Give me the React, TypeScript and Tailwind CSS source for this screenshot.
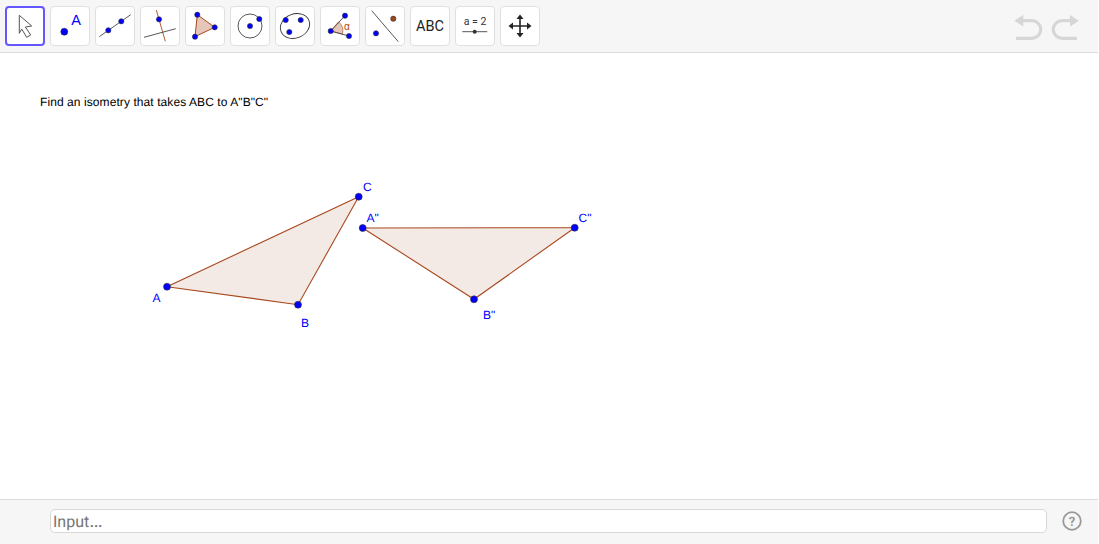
import React from 'react';

const BLUE = '#0000ff';
const LINE = '#a9481e';

const Pt = ({ x, y, r = 2.6, fill = BLUE }: { x: number; y: number; r?: number; fill?: string }) => (
  <circle cx={x} cy={y} r={r} fill={fill} stroke="#333" strokeWidth={0.6} />
);

const tools: React.ReactNode[] = [
  <path key="move" d="M14.3 9.3L26.7 20L20.4 21L25.7 29L21.7 31.3L16.7 23L14.3 27.3Z" fill="#fff" stroke="#555" strokeWidth={1} strokeLinejoin="round" />,
  <g key="point">
    <Pt x={14.3} y={25.7} r={3.5} />
    <text x={26} y={19} textAnchor="middle" fontSize={14.5} fill={BLUE} fontFamily="Liberation Sans, sans-serif">A</text>
  </g>,
  <g key="line">
    <line x1={4.3} y1={30.7} x2={35.7} y2={8.7} stroke="#444" strokeWidth={0.9} />
    <Pt x={13.3} y={24.3} />
    <Pt x={26.3} y={15.3} />
  </g>,
  <g key="perp">
    <line x1={16.3} y1={4} x2={25.3} y2={35.3} stroke={LINE} strokeWidth={0.9} />
    <line x1={4} y1={31.3} x2={35.7} y2={22.7} stroke="#444" strokeWidth={0.9} />
    <Pt x={19} y={13.3} />
  </g>,
  <g key="poly">
    <polygon points="12.3,8.7 29.7,21.3 10,30.7" fill="#e6c6b8" stroke={LINE} strokeWidth={1} />
    <Pt x={12.3} y={8.7} />
    <Pt x={29.7} y={21.3} />
    <Pt x={10} y={30.7} />
  </g>,
  <g key="circle">
    <circle cx={20} cy={20} r={12} fill="none" stroke="#444" strokeWidth={0.9} />
    <Pt x={20} y={20} />
    <Pt x={29.3} y={13} />
  </g>,
  <g key="conic">
    <ellipse cx={20} cy={20} rx={15} ry={12} transform="rotate(-22 20 20)" fill="none" stroke="#333" strokeWidth={0.9} />
    <Pt x={10.7} y={14} />
    <Pt x={25.7} y={14} />
    <Pt x={14.3} y={26} />
  </g>,
  <g key="angle">
    <path d="M10.7 25L18.5 15.8A12 12 0 0 1 22.4 28.2Z" fill="#e6c6b8" stroke={LINE} strokeWidth={0.6} />
    <line x1={10.7} y1={25} x2={25} y2={9.7} stroke="#444" strokeWidth={0.9} />
    <line x1={10.7} y1={25} x2={29} y2={30} stroke="#444" strokeWidth={0.9} />
    <Pt x={10.7} y={25} />
    <Pt x={25} y={9.7} />
    <Pt x={29} y={30} />
    <text x={27} y={23.5} textAnchor="middle" fontSize={10} fill={LINE} fontFamily="Liberation Sans, sans-serif">α</text>
  </g>,
  <g key="reflect">
    <line x1={6.7} y1={4.7} x2={33.3} y2={35.7} stroke="#444" strokeWidth={0.9} />
    <Pt x={11} y={27.3} />
    <Pt x={28.3} y={12.7} fill="#a0441c" />
  </g>,
  <text key="abc" x={20} y={25} textAnchor="middle" fontSize={14.5} fill="#222" fontFamily="Roboto, sans-serif">ABC</text>,
  <g key="slider">
    <text x={20} y={19} textAnchor="middle" fontSize={10.5} fill="#333" fontFamily="Roboto, sans-serif">a = 2</text>
    <line x1={7.3} y1={25.7} x2={32.3} y2={25.7} stroke="#444" strokeWidth={0.9} />
    <circle cx={19.7} cy={25.7} r={2} fill="#333" />
  </g>,
  <g key="pan">
    <path d="M20 11V29M11 20H29" stroke="#222" strokeWidth={1.6} fill="none" />
    <path d="M20 8.5L23.5 13H16.5ZM20 31.5L23.5 27H16.5ZM8.5 20L13 16.5V23.5ZM31.5 20L27 16.5V23.5Z" fill="#222" />
  </g>,
];

const triangles = [
  { points: [[167, 233.7], [298, 251.7], [358.7, 143.7]] },
  { points: [[362.7, 175], [574.7, 174.7], [474, 246.3]] },
];

const labels = [
  { text: 'C', pos: 'left-[363px] top-[128px]' },
  { text: 'A"', pos: 'left-[366.5px] top-[159px]' },
  { text: 'C"', pos: 'left-[578.5px] top-[159px]' },
  { text: 'A', pos: 'left-[152.5px] top-[239px]' },
  { text: 'B', pos: 'left-[301px] top-[264px]' },
  { text: 'B"', pos: 'left-[483px] top-[256px]' },
];

export default function App() {
  return (
    <div className="flex h-[544px] w-[1098px] flex-col overflow-hidden bg-white font-['Liberation_Sans',sans-serif] [text-rendering:geometricPrecision]">
      <div className="flex h-[53px] shrink-0 items-start justify-between border-b border-[#dcdcdc] bg-[#f6f6f6] pl-[5px] pr-[19px] pt-[6px]">
        <div className="flex gap-[5px]">
          {tools.map((icon, i) => (
            <button
              key={i}
              className={
                i === 0
                  ? 'h-10 w-10 rounded-[4px] border-2 border-[#6557ff] bg-white'
                  : 'h-10 w-10 rounded-[4px] border border-[#e0e0e0] bg-white'
              }
            >
              <svg
                viewBox={i === 0 ? '2 2 36 36' : '1 1 38 38'}
                className="h-full w-full"
              >
                {icon}
              </svg>
            </button>
          ))}
        </div>
        <svg width="66" height="30" viewBox="0 0 66 30" className="mt-[7px]" fill="none">
          <g stroke="#d6d6d6" strokeWidth={3.2}>
            <path d="M7 7.7H19A8.8 8.8 0 0 1 19 25.3H3" />
            <path d="M60 7.7H49A8.8 8.8 0 0 0 49 25.3H64" />
          </g>
          <path d="M1.3 7.7L10.3 2V13.5Z" fill="#d6d6d6" />
          <path d="M66 7.7L57 2V13.5Z" fill="#d6d6d6" />
        </svg>
      </div>

      <div className="relative flex-1">
        <p className="absolute left-10 top-[42px] text-xs leading-[14px] tracking-[0.08px] text-black">
          Find an isometry that takes ABC to A"B"C"
        </p>
        <svg className="absolute inset-0 h-full w-full">
          {triangles.map((t, i) => (
            <g key={i}>
              <polygon
                points={t.points.map((p) => p.join(',')).join(' ')}
                fill="#f3eae5"
                stroke={LINE}
                strokeWidth={1.1}
              />
              {t.points.map((p, j) => (
                <Pt key={j} x={p[0]} y={p[1]} r={3.5} />
              ))}
            </g>
          ))}
        </svg>
        {labels.map((l) => (
          <span key={l.text} className={`absolute text-xs leading-[13px] text-[#0000ff] ${l.pos}`}>
            {l.text}
          </span>
        ))}
      </div>

      <div className="flex h-[45px] shrink-0 items-center border-t border-[#dcdcdc] bg-[#f6f6f6] pb-[2px] pl-[50px] pr-[16px]">
        <div className="h-6 flex-1 rounded-[5px] border border-[#d8d8d8] bg-white pl-[2px] font-['Roboto',sans-serif] text-base leading-[20px] text-[#757575]">
          Input<span className="text-[20px] leading-none">…</span>
        </div>
        <svg width="20" height="20" viewBox="0 0 20 20" className="ml-[15px]">
          <circle cx="10" cy="10" r="8.8" fill="none" stroke="#999" strokeWidth={1.8} />
          <text x="10" y="14.5" textAnchor="middle" fontSize={13} fontWeight={700} fill="#999" fontFamily="Roboto, sans-serif">?</text>
        </svg>
      </div>
    </div>
  );
}
